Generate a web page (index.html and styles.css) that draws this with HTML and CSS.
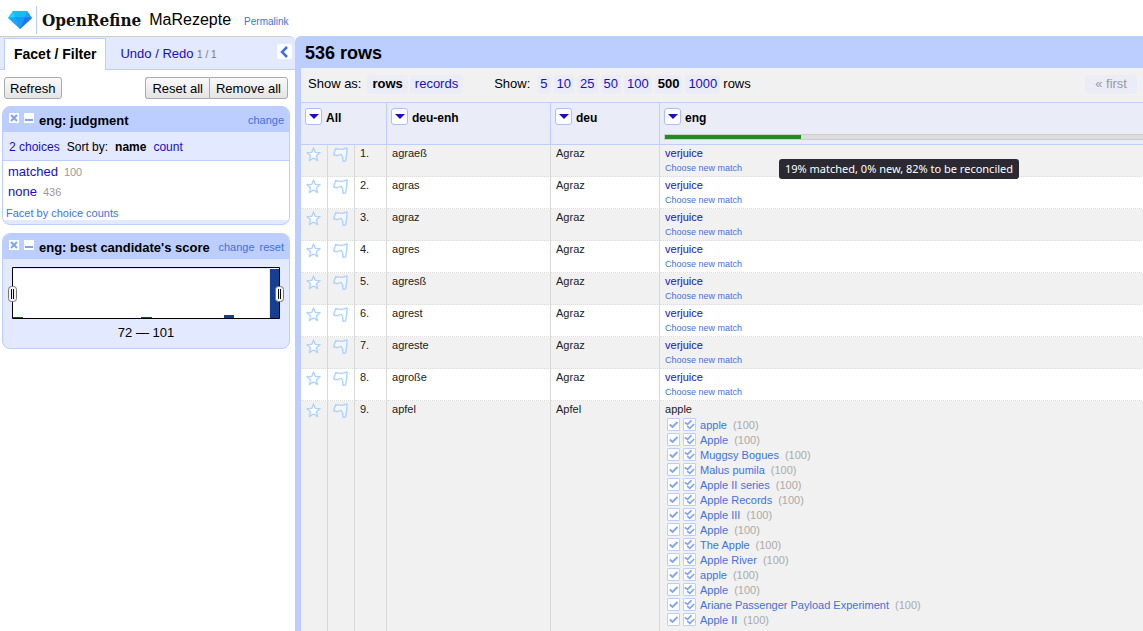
FILE: index.html
```html
<!DOCTYPE html>
<html lang="en">
<head>
<meta charset="utf-8">
<title>MaRezepte - OpenRefine</title>
<link rel="stylesheet" href="styles.css">
</head>
<body>
<svg class="defs" aria-hidden="true">
  <symbol id="star" viewBox="0 0 15 15"><path d="M7.500 1 9.300 5.400 14 5.700 10.400 8.700 11.600 13.600 7.500 11 3.400 13.600 4.600 8.700 1 5.700 5.700 5.400Z" fill="#fff" stroke="#b0d3fb" stroke-width="1.400" stroke-linejoin="round"/></symbol>
  <symbol id="flag" viewBox="0 0 15 15"><path d="M.8 8 2.500 1.800 9 2.400 14 1 13.800 6 12.600 14 10 14.200 9.600 10 8 7.300 4 8.700Z" fill="#fff" fill-opacity=".4" stroke="#b0d3fb" stroke-width="1.400" stroke-linejoin="round"/></symbol>
  <symbol id="check" viewBox="0 0 11 11"><path d="M1.800 5.500 4.500 8 9.500 3" fill="none" stroke="#7ea4ee" stroke-width="1.800"/></symbol>
  <symbol id="checks" viewBox="0 0 11 11"><path d="M.8 3.300 3.500 5.400 7.500 1.300M3.200 7.200 5.800 9.300 10.200 5" fill="none" stroke="#7ea4ee" stroke-width="1.700"/></symbol>
</svg>
<header class="top">
  <a class="brand" href="#">
    <svg width="24" height="18" viewBox="0 0 24 18" aria-hidden="true">
      <path d="M5 0H19L24 7 12 18 0 7Z" fill="#1aa7f5"/>
      <path d="M5 0H12L7 6 0 7Z" fill="#22d0fb"/><path d="M5 0H19L17 6H7Z" fill="#12bdfa"/>
      <path d="M7 6H17L12 18Z" fill="#169bf3"/><path d="M19 0 24 7 17 6Z" fill="#2b9cf5"/><path d="M24 7 12 18 17 6Z" fill="#2374ec"/>
    </svg>
    <span class="wordmark">OpenRefine</span>
  </a>
  <h1 class="project">MaRezepte</h1>
  <a class="permalink" href="#">Permalink</a>
</header>
<main class="app">
  <aside class="side">
    <nav class="tabs">
      <a class="tab active" href="#">Facet / Filter</a>
      <a class="tab" href="#">Undo / Redo <small>1 / 1</small></a>
      <button class="collapse" aria-label="Hide panel"><svg width="14" height="14" viewBox="0 0 14 14"><path d="M10 2 5 7 10 12" fill="none" stroke="#3f6fe0" stroke-width="2.500"/></svg></button>
    </nav>
    <div class="actions">
      <button class="btn">Refresh</button>
      <div class="group"><button class="btn">Reset all</button><button class="btn">Remove all</button></div>
    </div>
    <section class="facet">
      <header class="facet-head">
        <button class="mini" aria-label="Remove facet"><svg width="10" height="10" viewBox="0 0 10 10"><path d="M2 2 8 8M8 2 2 8" stroke="#7ea4ee" stroke-width="2"/></svg></button>
        <button class="mini" aria-label="Minimize facet"><svg width="10" height="10" viewBox="0 0 10 10"><path d="M1 7H9" stroke="#7ea4ee" stroke-width="2"/></svg></button>
        <h2>eng: judgment</h2>
        <a class="minor" href="#">change</a>
      </header>
      <div class="controls"><a href="#">2 choices</a><span>Sort by:</span><b>name</b><a href="#">count</a></div>
      <div class="choices">
        <div class="choice"><a href="#">matched</a><span>100</span></div>
        <div class="choice"><a href="#">none</a><span>436</span></div>
        <a class="by-count" href="#">Facet by choice counts</a>
      </div>
    </section>
    <section class="facet">
      <header class="facet-head">
        <button class="mini" aria-label="Remove facet"><svg width="10" height="10" viewBox="0 0 10 10"><path d="M2 2 8 8M8 2 2 8" stroke="#7ea4ee" stroke-width="2"/></svg></button>
        <button class="mini" aria-label="Minimize facet"><svg width="10" height="10" viewBox="0 0 10 10"><path d="M1 7H9" stroke="#7ea4ee" stroke-width="2"/></svg></button>
        <h2>eng: best candidate's score</h2>
        <a class="minor" href="#">change</a><a class="minor" href="#">reset</a>
      </header>
      <div class="range">
        <svg class="histogram" viewBox="0 0 278 53" role="img" aria-label="Score histogram">
          <path d="M5.500 .5H272.500V51.500H5.500Z" fill="#fff" stroke="#000"/>
          <path d="M6 1.500H262.500V51" fill="none" stroke="#e3e9ff"/>
          <path d="M6 50h10v1H6zM134 50h11v1h-11zM217 48h10v3h-10zM263 2h9v49h-9z" fill="#153f91"/>
          <g fill="#f4f4f4" stroke="#777"><rect x="1.500" y="19.500" width="8" height="15" rx="3"/><rect x="268.500" y="19.500" width="8" height="15" rx="3"/></g>
          <path d="M4.500 22V32M6.500 22V32M271.500 22V32M273.500 22V32" stroke="#000"/>
        </svg>
        <p>72 — 101</p>
      </div>
    </section>
  </aside>
  <section class="data">
    <h2 class="summary">536 rows</h2>
    <div class="viewbar">
      <div class="modes"><span class="lead">Show as:</span><b class="pill">rows</b><a class="pill" href="#">records</a></div>
      <div class="sizes"><span class="lead">Show:</span><a class="pill" href="#">5</a><a class="pill" href="#">10</a><a class="pill" href="#">25</a><a class="pill" href="#">50</a><a class="pill" href="#">100</a><b class="pill">500</b><a class="pill" href="#">1000</a><span>rows</span></div>
      <span class="pill first">« first</span>
    </div>
    <div class="grid-wrap">
      <table class="grid">
        <colgroup><col class="c-icon"><col class="c-icon"><col class="c-index"><col class="c-enh"><col class="c-deu"><col></colgroup>
        <thead><tr>
          <th colspan="3"><div class="col-head"><button class="menu" aria-label="All menu"></button>All</div></th>
          <th><div class="col-head"><button class="menu" aria-label="deu-enh menu"></button>deu-enh</div></th>
          <th><div class="col-head"><button class="menu" aria-label="deu menu"></button>deu</div></th>
          <th><div class="col-head"><button class="menu" aria-label="eng menu"></button>eng</div><div class="progress"><div class="matched" style="width:19%"></div></div></th>
        </tr></thead>
        <tbody id="rows"></tbody>
      </table>
      <div class="tooltip" role="tooltip">19% matched, 0% new, 82% to be reconciled</div>
    </div>
  </section>
</main>
<script src="app.js"></script>
</body>
</html>
```
FILE: styles.css
```css
* { box-sizing: border-box; }
body { margin: 0; height: 100vh; display: flex; flex-direction: column; overflow: hidden; background: #fff; color: #000; font: 13px/16px "Liberation Sans", Arial, sans-serif; }
a { color: #1a0dc4; text-decoration: none; }
h1, h2, p { margin: 0; }
button { margin: 0; padding: 0; font: inherit; color: inherit; }
svg { display: block; }
.defs { position: absolute; width: 0; height: 0; }

.top { display: flex; align-items: center; height: 36px; padding: 4px 8px 0; flex: none; }
.brand { display: flex; align-items: center; gap: 4px; color: #111; }
.wordmark { border-left: 1px solid #bccdff; padding-left: 5px; font: bold 17px/28px "DejaVu Serif Condensed", "DejaVu Serif", serif; }
.project { margin-left: 8px; font-size: 16px; font-weight: normal; }
.permalink { margin-left: 13px; padding-top: 3px; font-size: 10px; color: #4272db; }

.app { display: flex; flex: 1; min-height: 0; }
.side { width: 295px; flex: none; }
.tabs { display: flex; height: 34px; padding: 1px 3px 0 4px; border-top: 1px solid #ccc; border-bottom: 1px solid #bccdff; border-radius: 0 6px 0 0; background: #e3e9ff; }
.tab { height: 32px; padding: 8px 14px 0; }
.tab.active { padding: 7px 9px 0; border: 1px solid #bccdff; border-bottom: 0; background: #fff; color: #000; font-size: 14px; font-weight: bold; box-shadow: 0 1px #fff; }
.tab small { font-size: 10px; color: #777; }
.collapse { width: 15px; height: 15px; margin: 6px 0 0 auto; border: 0; border-radius: 2px; background: #fff; }
.actions { display: flex; justify-content: space-between; padding: 7px 7px 7px 4px; }
.group { display: flex; }
.btn { height: 22px; padding: 1px 5px 0; border: 1px solid #aaa; border-radius: 3px; background: linear-gradient(#f9f9f9, #e4e4e4); }
.group .btn { padding: 1px 6px 0; }
.group .btn:first-child { border-radius: 3px 0 0 3px; border-right: 0; }
.group .btn:last-child { border-radius: 0 3px 3px 0; }

.facet { margin: 0 5px 8px 2px; border: 1px solid #bccdff; border-radius: 8px; background: #e3e9ff; overflow: hidden; }
.facet-head { display: flex; align-items: flex-start; gap: 5px; height: 25px; padding: 6px 5px 0 6px; background: #bccdff; }
.facet-head h2 { flex: 1; font-size: 13px; font-weight: bold; }
.mini { width: 10px; height: 10px; border: 0; background: #fff; }
.minor { font-size: 11px; line-height: 14px; color: #4272db; }
.controls { display: flex; gap: 7px; height: 29px; padding: 7px 6px; border-bottom: 1px solid #bccdff; font-size: 12px; }
.choices { margin-bottom: 4px; padding-left: 3px; background: #fff; }
.choice { display: flex; gap: 6px; height: 20px; padding: 3px 2px 0; }
.choice span { font-size: 11px; color: #999; }
.by-count { display: block; padding-top: 5px; font-size: 11px; line-height: 14px; color: #4272db; }
.range { padding: 8px 4px 7px; text-align: center; }
.histogram { width: 100%; }
.range p { padding: 5px 0 0; }

.data { flex: 1; min-width: 0; display: flex; flex-direction: column; padding-left: 6px; border-radius: 6px 0 0; background: #bccdff; overflow: hidden; }
.summary { flex: none; padding: 7px 4px 5px; font-size: 18px; line-height: 20px; }
.viewbar { display: flex; flex: none; align-items: center; height: 34px; padding: 0 6px 2px 7px; background: #f1f1f1; white-space: nowrap; }
.modes, .sizes { display: flex; align-items: center; gap: 2px; }
.modes { margin-right: 31px; }
.sizes { gap: 3px; }
.lead { margin-right: 4px; }
.pill { padding: 1px 3px 2px; border-radius: 4px; background: #eaecf8; }
.modes .pill { padding: 1px 5px 2px; }
.first { margin-left: auto; padding: 1px 10px 2px; color: #999; }

.grid-wrap { flex: 1; min-height: 0; position: relative; overflow: hidden; background: #fff; }
.grid { width: 1085px; table-layout: fixed; border-collapse: separate; border-spacing: 0; font-size: 11px; line-height: 14px; color: #222; }
.c-icon { width: 27px; }
.c-index { width: 32px; }
.c-enh { width: 164px; }
.c-deu { width: 109px; }
.grid th { height: 43px; padding: 5px 5px 0 4px; vertical-align: top; text-align: left; border: solid #bccdff; border-width: 1px 1px 1px 0; background: #eaecf8; color: #000; }
.col-head { display: flex; align-items: flex-end; gap: 4px; height: 17px; font-size: 12px; }
.menu { display: grid; place-items: center; width: 17px; height: 17px; border: 1px solid #a9beff; border-radius: 3px; background: #fff; }
.menu::before { content: ""; border: solid transparent; border-width: 5px 5px 0; border-top-color: #1a0dc4; }
.progress { height: 6px; margin-top: 9px; border: 1px solid #ccc; background: #ddd; }
.matched { height: 4px; background: #228b22; }
.grid td { padding: 1px 5px 0; vertical-align: top; border-right: 1px solid #d8d8d8; border-bottom: 1px dotted #ddd; }
.grid tbody tr:nth-child(odd) { background: #f1f1f1; }
.grid .icon { padding-top: 2px; }
.grid .icon svg { width: 15px; height: 15px; }
.rematch { display: block; font-size: 9px; line-height: 16px; color: #4272db; }
.candidates { padding: 1px 0 15px 2px; }
.candidate { display: flex; align-items: center; height: 15px; }
.candidate a { margin: 0 6px 0 1px; color: #4272db; }
.candidate span { color: #aaa; }
.judge { width: 13px; height: 13px; margin-right: 3px; border: 1px solid #bccdff; border-radius: 1px; background: #fff; }
.judge svg { width: 11px; height: 11px; }
.tooltip { position: absolute; left: 478px; top: 57px; padding: 2px 6px; border-radius: 3px; background: #2b2a33; color: #fff; font: 11px/16px "Noto Sans", "Open Sans", sans-serif; white-space: nowrap; }
```
FILE: app.js
```js
const terms = ["agraeß", "agras", "agraz", "agres", "agresß", "agrest", "agreste", "agroße"];
const candidates = ["apple", "Apple", "Muggsy Bogues", "Malus pumila", "Apple II series", "Apple Records", "Apple III", "Apple", "The Apple", "Apple River", "apple", "Apple", "Ariane Passenger Payload Experiment", "Apple II"];
const icon = (id) => `<svg aria-hidden="true"><use href="#${id}"/></svg>`;
const row = (n, enh, deu, eng) => `<tr><td class="icon">${icon("star")}</td><td class="icon">${icon("flag")}</td><td>${n}.</td><td>${enh}</td><td>${deu}</td><td>${eng}</td></tr>`;
const judge = (id, label) => `<button class="judge" aria-label="${label}">${icon(id)}</button>`;
const matched = `<a href="#">verjuice</a><a class="rematch" href="#">Choose new match</a>`;
const list = candidates.map((c) => `<div class="candidate">${judge("check", "Match this cell")}${judge("checks", "Match identical cells")}<a href="#">${c}</a><span>(100)</span></div>`).join("");
document.getElementById("rows").innerHTML =
  terms.map((t, i) => row(i + 1, t, "Agraz", matched)).join("") + row(9, "apfel", "Apfel", `apple<div class="candidates">${list}</div>`);
```
